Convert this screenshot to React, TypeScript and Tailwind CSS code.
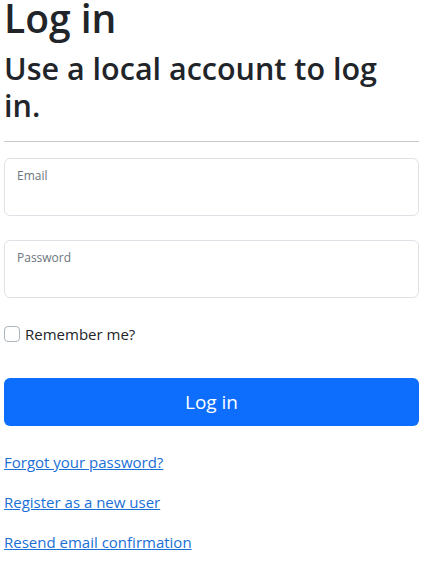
export default function App() {
  return (
    <div className="min-h-screen bg-white pl-[4px] pr-[8px] text-[#212529] font-['Open_Sans',sans-serif]">
      <h1 className="-mt-[4px] mb-[10px] text-[39px] font-semibold leading-[44px]">Log in</h1>
      <h2 className="mb-[17px] pr-[30px] text-[30.5px] font-semibold leading-[37px]">
        Use a local account to log in.
      </h2>
      <hr className="mb-[16px] border-t border-[#c8c8c8]" />
      <form className="flex flex-col">
        <div className="relative h-[58px] rounded-[6px] border border-[#dee2e6]">
          <label className="absolute left-[12px] top-[8px] text-[12px] text-[#6c757d]">Email</label>
        </div>
        <div className="relative mt-[24px] h-[58px] rounded-[6px] border border-[#dee2e6]">
          <label className="absolute left-[12px] top-[8px] text-[12px] text-[#6c757d]">Password</label>
        </div>
        <label className="mt-[24px] flex items-center gap-[5px] text-[15px] leading-[24px]">
          <span className="h-[16px] w-[16px] rounded-[4px] border border-[#adb5bd] bg-white" />
          Remember me?
        </label>
        <button
          type="button"
          className="mt-[32px] h-[48px] w-full rounded-[6px] bg-[#0d6efd] text-[19px] text-white"
        >
          Log in
        </button>
        <div className="mt-[24px] flex flex-col gap-[16px] text-[15px] leading-[24px]">
          <a href="#" className="text-[#1a6fd6] underline">Forgot your password?</a>
          <a href="#" className="text-[#1a6fd6] underline">Register as a new user</a>
          <a href="#" className="text-[#1a6fd6] underline">Resend email confirmation</a>
        </div>
      </form>
    </div>
  );
}
